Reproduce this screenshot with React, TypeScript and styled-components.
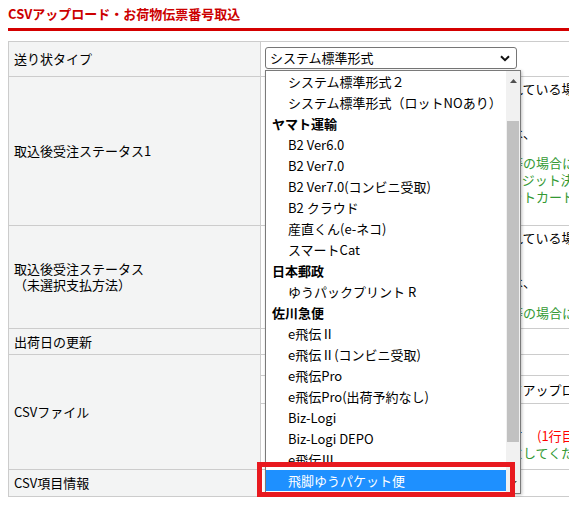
import React from 'react';
import styled, { createGlobalStyle } from 'styled-components';

const GlobalStyle = createGlobalStyle`
  html, body {
    margin: 0;
    padding: 0;
    background: #fff;
    overflow: hidden;
  }
  body {
    font-family: "Noto Sans CJK JP", "Noto Sans", sans-serif;
    font-size: 13px;
    color: #000;
  }
`;

type Option = { label: string; group?: boolean; selected?: boolean };

const options: Option[] = [
    { label: 'システム標準形式２' },
    { label: 'システム標準形式（ロットNOあり）' },
    { label: 'ヤマト運輸', group: true },
    { label: 'B2 Ver6.0' },
    { label: 'B2 Ver7.0' },
    { label: 'B2 Ver7.0(コンビニ受取)' },
    { label: 'B2 クラウド' },
    { label: '産直くん(e-ネコ)' },
    { label: 'スマートCat' },
    { label: '日本郵政', group: true },
    { label: 'ゆうパックプリント R' },
    { label: '佐川急便', group: true },
    { label: 'e飛伝Ⅱ' },
    { label: 'e飛伝Ⅱ(コンビニ受取)' },
    { label: 'e飛伝Pro' },
    { label: 'e飛伝Pro(出荷予約なし)' },
    { label: 'Biz-Logi' },
    { label: 'Biz-Logi DEPO' },
    { label: 'e飛伝Ⅲ' },
    { label: '飛脚ゆうパケット便', selected: true },
];

const App = () => {
    return (
        <>
            <GlobalStyle />
            <Page>
                <Title>CSVアップロード・お荷物伝票番号取込</Title>
                <FormGrid>
                    <HeadCell>送り状タイプ</HeadCell>
                    <SelectCell>
                        <SelectWrap>
                            <SelectBox>
                                <span>システム標準形式</span>
                                <svg width="10" height="7" viewBox="0 0 10 7">
                                    <polyline points="1,1.2 5,5.2 9,1.2" fill="none" stroke="#111" strokeWidth="2" />
                                </svg>
                            </SelectBox>
                            <DropList>
                                <Items>
                                    {options.map((o) => (
                                        <Item key={o.label} $group={o.group} $selected={o.selected}>
                                            {o.label}
                                        </Item>
                                    ))}
                                </Items>
                                <ScrollBar>
                                    <ArrowBtn>
                                        <svg width="7" height="4" viewBox="0 0 7 4">
                                            <polygon points="0,4 3.5,0 7,4" fill="#505050" />
                                        </svg>
                                    </ArrowBtn>
                                    <Thumb />
                                    <Spacer />
                                    <ArrowBtn>
                                        <svg width="7" height="4" viewBox="0 0 7 4">
                                            <polygon points="0,0 3.5,4 7,0" fill="#505050" />
                                        </svg>
                                    </ArrowBtn>
                                </ScrollBar>
                            </DropList>
                            <Highlight />
                        </SelectWrap>
                    </SelectCell>

                    <HeadCell>取込後受注ステータス1</HeadCell>
                    <DataCell>
                        <Note>受注ステータスが「発送済み」に設定されている場合は上書きしません</Note>
                        <Note $gap={27}>取込後の受注ステータスを変更する場合は、</Note>
                        <Note $gap={13} $tone="green">
                            支払方法が代金引換・後払い・銀行振込等の場合に選択したステータスになります
                        </Note>
                        <Note $tone="green">ご指定のステータスになります。またクレジット決済の場合は</Note>
                        <Note $tone="green">決済の場合、コンビニ決済およびクレジットカード決済</Note>
                    </DataCell>

                    <HeadCell>
                        取込後受注ステータス
                        <br />
                        （未選択支払方法）
                    </HeadCell>
                    <DataCell>
                        <Note>受注ステータスが「発送済み」に設定されている場合は上書きしません</Note>
                        <Note $gap={27}>未選択の支払方法の受注を変更する場合は、</Note>
                        <Note $gap={14} $tone="green">
                            支払方法が代金引換・後払い・銀行振込等の場合に選択したステータスになります
                        </Note>
                    </DataCell>

                    <HeadCell>出荷日の更新</HeadCell>
                    <DataCell />

                    <HeadCell>CSVファイル</HeadCell>
                    <DataCell>
                        <FileBox>取込用ファイルを選択し、ボタンを押してアップロードしてください</FileBox>
                        <Note $gap={23}>
                            ファイル先頭に項目名の見出し行を付けて
                            <RedText>(1行目は見出し行になります)</RedText>
                        </Note>
                        <Note $tone="green">ファイルの文字コードを日本語標準形式にしてください</Note>
                    </DataCell>

                    <HeadCell>CSV項目情報</HeadCell>
                    <DataCell />
                </FormGrid>
            </Page>
        </>
    );
};

const Page = styled.div`
    width: 900px;
    padding: 4px 0 0 8px;
`;

const Title = styled.h2`
    margin: 0;
    padding-bottom: 5px;
    font-size: 13px;
    line-height: 19px;
    font-weight: bold;
    color: #cc0000;
    border-bottom: 3px solid #d40000;
`;

const FormGrid = styled.div`
    margin-top: 10px;
    width: 760px;
    display: grid;
    grid-template-columns: 251px 1fr;
    grid-template-rows: 34px 148px 102px 25px 114px 26px;
    gap: 1px;
    background: #cccccc;
    border: 1px solid #cccccc;
`;

const HeadCell = styled.div`
    background: #f3f4f4;
    display: flex;
    flex-direction: column;
    justify-content: center;
    padding-left: 5px;
    line-height: 16px;
    font-weight: 400;
    white-space: nowrap;
`;

const DataCell = styled.div`
    background: #fff;
    padding: 3px 0 0 15px;
    overflow: hidden;
`;

const SelectCell = styled.div`
    position: relative;
    z-index: 10;
    background: #fff;
    padding: 5px 0 0 4px;
`;

const SelectWrap = styled.div`
    position: relative;
    width: 252px;
`;

const SelectBox = styled.div`
    box-sizing: border-box;
    width: 252px;
    height: 22px;
    border: 1px solid #767676;
    border-radius: 3px;
    padding: 0 6px 0 4px;
    display: flex;
    align-items: center;
    justify-content: space-between;
    line-height: 20px;
    background: #fff;
`;

const DropList = styled.div`
    position: absolute;
    top: 23px;
    left: 0;
    box-sizing: border-box;
    width: 256px;
    height: 424px;
    border: 1px solid #7a7a7a;
    background: #fff;
    display: flex;
    overflow: hidden;
    box-shadow: 1px 1px 3px rgba(0, 0, 0, 0.25);
`;

const Items = styled.div`
    flex: 1;
    overflow: hidden;
`;

const Item = styled.div<{ $group?: boolean; $selected?: boolean }>`
    height: 21px;
    line-height: 21px;
    white-space: nowrap;
    padding-left: ${(p) => (p.$group ? 6 : 22)}px;
    font-weight: ${(p) => (p.$group ? 'bold' : 'normal')};
    background: ${(p) => (p.$selected ? '#1e90ff' : 'transparent')};
    color: ${(p) => (p.$selected ? '#fff' : '#000')};
`;

const ScrollBar = styled.div`
    width: 14px;
    background: #f1f1f1;
    display: flex;
    flex-direction: column;
`;

const ArrowBtn = styled.div`
    height: 20px;
    display: flex;
    align-items: center;
    justify-content: center;
`;

const Thumb = styled.div`
    margin: 30px 1px 0 1px;
    height: 321px;
    background: #c1c1c1;
`;

const Spacer = styled.div`
    flex: 1;
`;

const Highlight = styled.div`
    position: absolute;
    left: -8px;
    top: 415px;
    box-sizing: border-box;
    width: 258px;
    height: 35px;
    border: 5px solid #e8191f;
`;

const Note = styled.div<{ $gap?: number; $tone?: 'green' }>`
    margin-top: ${(p) => p.$gap ?? 0}px;
    line-height: 17px;
    white-space: nowrap;
    color: ${(p) => (p.$tone === 'green' ? '#339933' : '#000')};
`;

const RedText = styled.span`
    margin-left: 14px;
    color: #ff0000;
`;

const FileBox = styled.div`
    margin: 17px 0 0 -15px;
    padding-left: 15px;
    height: 27px;
    line-height: 27px;
    border-top: 1px solid #cccccc;
    border-bottom: 1px solid #cccccc;
    white-space: nowrap;
`;

export default App;
